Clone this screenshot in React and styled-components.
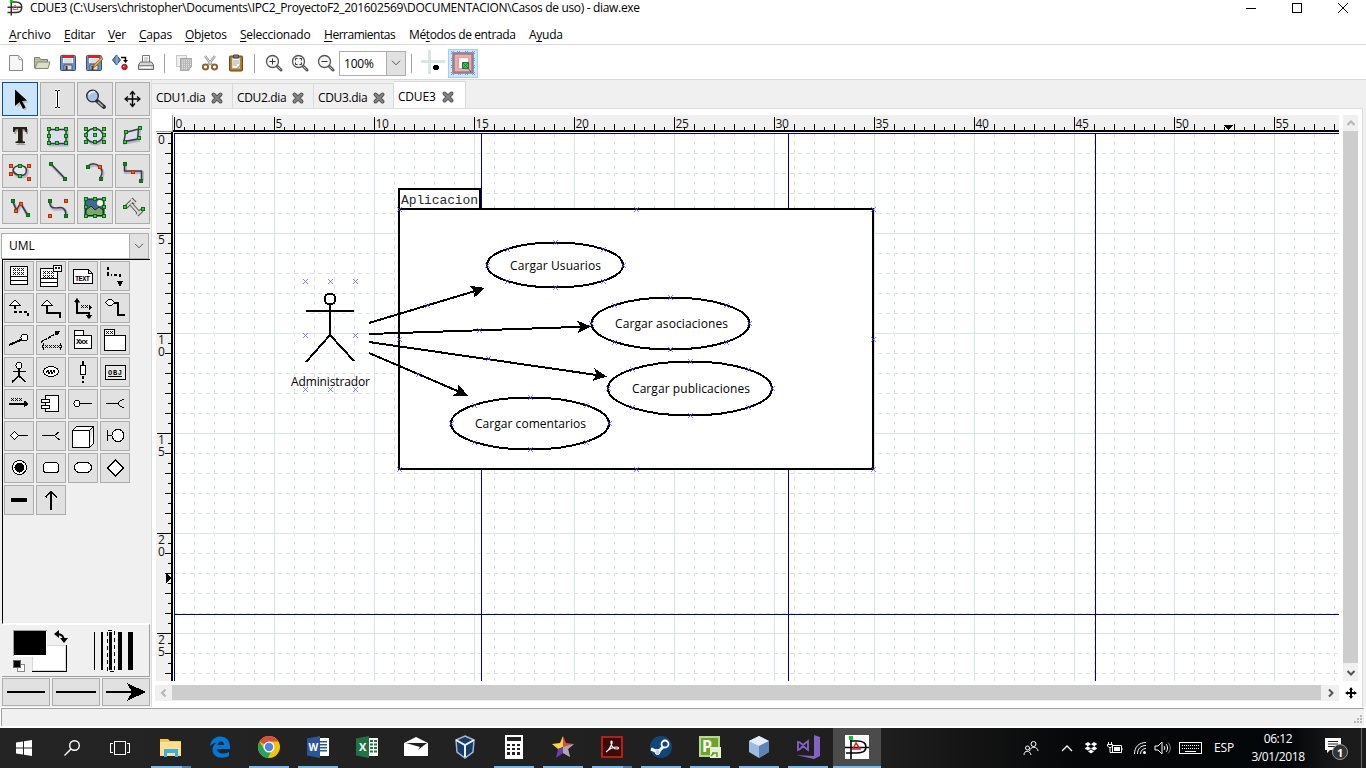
import React from "react";
import styled, { createGlobalStyle } from "styled-components";

const Global = createGlobalStyle`
  html, body { margin: 0; padding: 0; overflow: hidden; }
  body { width: 1366px; height: 768px; background: #f0f0f0; color: #000; }
  * { box-sizing: border-box; }
  svg { display: block; flex: none; }
`;

const ui = `"Open Sans", "Noto Sans", sans-serif`;

const Screen = styled.div`
  width: 1366px;
  height: 768px;
  display: flex;
  flex-direction: column;
  font: 12px/16px ${ui};
  background: #f0f0f0;
`;
const TitleBar = styled.header`
  height: 24px;
  padding: 0 0 8px 6px;
  display: flex;
  align-items: center;
  background: #fff;
`;
const Title = styled.span`
  flex: 1;
  margin-left: 6px;
  white-space: nowrap;
  letter-spacing: ${(p) => p.$ls || 0}px;
`;
const WindowButtons = styled.div`
  display: flex;
  width: 138px;
`;
const MenuBar = styled.nav`
  height: 21px;
  padding: 2px 0 0 9px;
  display: flex;
  gap: 14px;
  align-items: center;
  background: #fff;
  border-bottom: 1px solid #d9d9d9;
`;
const MenuItem = styled.span`
  width: ${(p) => p.$w}px;
  white-space: nowrap;
  letter-spacing: ${(p) => p.$ls}px;
  u { text-underline-offset: 2px; text-decoration-skip-ink: none; }
`;
const Toolbar = styled.div`
  height: 35px;
  padding: 2px 3px 0;
  display: flex;
  align-items: center;
  background: #fff;
  border-bottom: 1px solid #d9d9d9;
`;
const ToolSlot = styled.div`
  width: 26px;
  height: 26px;
  display: flex;
  align-items: center;
  justify-content: center;
`;
const ToolSep = styled.div`
  width: 1px;
  height: 19px;
  margin: 0 ${(p) => p.$r ?? 6}px 0 ${(p) => p.$l ?? 5}px;
  background: #a0a0a0;
`;
const ZoomCombo = styled.div`
  width: 67px;
  height: 25px;
  display: flex;
  border: 1px solid #acacac;
  background: #fff;
  line-height: 23px;
  padding-left: 4px;
  justify-content: space-between;
  letter-spacing: -0.2px;
`;
const ComboArrow = styled.div`
  flex: none;
  width: 20px;
  display: flex;
  align-items: center;
  justify-content: center;
  background: #e1e1e1;
  border: 1px solid #adadad;
  margin: -1px;
`;
const SnapButton = styled.div`
  width: 30px;
  height: 29px;
  margin-left: 2px;
  display: flex;
  align-items: center;
  justify-content: center;
  background: #cce8ff;
  border: 1px solid #99d1ff;
`;
const Body = styled.div`
  height: 627px;
  display: flex;
`;
const Side = styled.aside`
  width: 152px;
  display: flex;
  flex-direction: column;
  padding: 2px 1px 0 2px;
  border-right: 1px solid #dcdcdc;
`;
const Tools = styled.div`
  display: grid;
  grid-template-columns: 36px 35px 36px 35px;
  grid-auto-rows: 34px;
  gap: 2px;
`;
const Cell = styled.div`
  display: flex;
  align-items: center;
  justify-content: center;
  background: ${(p) => (p.$on ? "#cce4f7" : "#e1e1e1")};
  border: 1px solid ${(p) => (p.$on ? "#005499" : "#adadad")};
`;
const ToolCell = styled(Cell)`
  padding-right: ${(p) => (p.$on ? 0 : 2)}px;
`;
const Rule = styled.div`
  height: 2px;
  margin: 4px 0 3px -2px;
  background: #a0a0a0;
  border-bottom: 1px solid #fff;
`;
const SheetCombo = styled.div`
  height: 26px;
  margin: 0 1px 0 -1px;
  display: flex;
  justify-content: space-between;
  padding-left: 7px;
  line-height: 24px;
  background: #fff;
  border: 1px solid #acacac;
`;
const SheetArea = styled.div`
  height: 365px;
  padding: 1px 0 0 1px;
  border-top: 1px solid #000;
  border-left: 1px solid #000;
  border-bottom: 1px solid #fff;
`;
const Sheet = styled.div`
  display: grid;
  grid-template-columns: repeat(4, 30px);
  grid-auto-rows: 30px;
  gap: 2px;
`;
const StyleArea = styled.div`
  height: 53px;
  padding-top: 1px;
  border-top: 1px solid #fff;
  border-right: 1px solid #a0a0a0;
  border-bottom: 1px solid #a0a0a0;
`;
const LineButtons = styled.div`
  margin-top: 1px;
  display: grid;
  grid-template-columns: repeat(3, 48px);
  height: 28px;
  gap: 2px;
`;
const Notebook = styled.section`
  flex: 1;
  display: flex;
  flex-direction: column;
`;
const Tabs = styled.div`
  height: 28px;
  padding-top: 1px;
  display: flex;
  align-items: flex-end;
`;
const Tab = styled.div`
  height: ${(p) => (p.$on ? 28 : 25)}px;
  width: ${(p) => p.$w}px;
  margin-bottom: ${(p) => (p.$on ? -1 : 0)}px;
  padding: ${(p) => (p.$on ? 2 : 3)}px 0 0 4px;
  display: flex;
  align-items: center;
  gap: ${(p) => p.$gap}px;
  background: ${(p) => (p.$on ? "#fff" : "#f0f0f0")};
  border-top: 1px solid #d9d9d9;
  border-right: 1px solid #d9d9d9;
  white-space: nowrap;
  letter-spacing: ${(p) => p.$ls}px;
`;
const Page = styled.div`
  width: 1211px;
  height: 599px;
  background: #fff;
  border-top: 1px solid #dcdcdc;
  border-right: 1px solid #dcdcdc;
  padding: 6px 0 0 4px;
  display: grid;
  grid-template-columns: 17px 1166px 4px 15px;
  grid-template-rows: 17px 549px 4px 16px;
`;
const Corner = styled.div`
  border-right: 1px solid #a0a0a0;
  border-bottom: 1px solid #a0a0a0;
`;
const VScroll = styled.div`
  grid-column: 4;
  grid-row: 1 / 3;
  display: flex;
  flex-direction: column;
  background: #f0f0f0;
`;
const HScroll = styled.div`
  grid-column: 1 / 3;
  grid-row: 4;
  margin-left: -1px;
  display: flex;
  background: #f0f0f0;
`;
const Thumb = styled.div`
  flex: 1;
  background: #cdcdcd;
  margin-bottom: ${(p) => p.$mb || 0}px;
`;
const ScrollArrow = styled.div`
  width: ${(p) => p.$w}px;
  height: ${(p) => p.$h}px;
  display: flex;
  align-items: center;
  justify-content: center;
`;
const Pan = styled.div`
  grid-column: 4;
  grid-row: 4;
  display: flex;
  align-items: center;
  justify-content: center;
`;
const Status = styled.footer`
  height: 21px;
  padding: 1px 2px 2px 1px;
  background: #fff;
`;
const StatusInner = styled.div`
  height: 18px;
  display: flex;
  justify-content: flex-end;
  align-items: flex-end;
  background: #f0f0f0;
  border-top: 1px solid #a0a0a0;
  border-left: 1px solid #a0a0a0;
`;
const Taskbar = styled.div`
  height: 40px;
  display: flex;
  color: #fff;
  background: linear-gradient(90deg, #242424 0, #1f1f1f 880px, #151515 960px, #050708 1080px, #030608 1290px, #1a1a1a 1340px, #1c1c1c 100%);
`;
const StartArea = styled.div`
  flex: none;
  width: 146px;
  display: flex;
`;
const SysButton = styled.div`
  width: 48px;
  display: flex;
  align-items: center;
  justify-content: center;
`;
const AppButton = styled.div`
  flex: none;
  width: 49px;
  padding: 0 ${(p) => (p.$on ? 0 : 4)}px 0 ${(p) => (p.$on ? 1 : 5)}px;
  display: flex;
  flex-direction: column;
  justify-content: space-between;
  align-items: center;
`;
const AppFace = styled.div`
  height: 38px;
  width: 100%;
  display: flex;
  align-items: center;
  justify-content: center;
  background: ${(p) => (p.$on ? "#4b4b4b" : "transparent")};
`;
const RunBar = styled.div`
  height: 2px;
  width: 100%;
  background: ${(p) => (p.$multi ? "linear-gradient(90deg,#76b9ed 31px,#4b83b0 31px)" : "#76b9ed")};
`;
const Tray = styled.div`
  flex: 1;
  display: flex;
  align-items: center;
  padding-left: 132px;
`;
const TrayItem = styled.div`
  flex: none;
  width: ${(p) => p.$w}px;
  display: flex;
  justify-content: center;
  white-space: nowrap;
  letter-spacing: -0.2px;
`;
const Clock = styled.div`
  flex: none;
  width: 66px;
  text-align: center;
  line-height: 18px;
  letter-spacing: -0.4px;
`;
const ShowDesktop = styled.div`
  width: 5px;
  height: 40px;
  margin-left: auto;
  border-left: 1px solid #6a6a6a;
`;

/* ---------- small drawing helpers ---------- */
const Ico = ({ w = 20, h = w, crisp, children, vb }) => (
  <svg width={w} height={h} viewBox={vb || `0 0 ${w} ${h}`} fill="none" stroke="#000" strokeWidth="1" shapeRendering={crisp ? "crispEdges" : "auto"}>
    {children}
  </svg>
);
const Chevron = () => (
  <Ico w={10} h={6}><path d="M1 .8l4 4 4-4" stroke="#555" /></Ico>
);
const DiaLogo = ({ s = 20 }) => (
  <Ico w={s} vb="0 0 24 24">
    <path d="M7 0v22M7 4h6c5 0 8 3 8 7s-3 7-8 7H2M2 11h18" stroke="#333" strokeWidth="2" />
    <path d="M12 8l4 6H9z" stroke="#d55" strokeWidth="1.200" />
    <path d="M5 1h4v4H5z" fill="#0c0" stroke="none" />
  </Ico>
);

/* ---------- toolbar icons ---------- */
const Floppy = ({ pen }) => (
  <Ico w={18}>
    <rect x="1.5" y="1.5" width="15" height="15" rx="1" fill="#6f93c4" stroke="#2f4f86" />
    <path d="M4 2h10v7H4z" fill="#fff" stroke="none" />
    <path d="M3 1h12v3H3z" fill="#e02020" stroke="none" />
    <path d="M5 6h8M5 8h8" stroke="#bbb" />
    <path d="M5 11h8v5H5z" fill="#ddd" stroke="#555" />
    <path d="M6.500 12h2v4h-2z" fill="#334" stroke="none" />
    {pen && <><path d="M16.500 3L9 11l-2 3 3.500-1.500L18 5z" fill="#f3a342" stroke="#9a5a10" strokeWidth=".8" /><path d="M7 14l2-1-1-1z" fill="#222" stroke="none" /></>}
  </Ico>
);
const Mag = ({ kind }) => (
  <Ico w={18}>
    <path d="M11 11l5 5" stroke="#555" strokeWidth="3" strokeLinecap="round" />
    <path d="M12.500 12.500l3 3" stroke="#ccc" />
    <circle cx="7.500" cy="7.500" r="6" fill="#f4f6f4" stroke="#555" strokeWidth="1.300" />
    {kind === "in" && <path d="M4.500 7.500h6M7.500 4.500v6" stroke="#333" />}
    {kind === "out" && <path d="M4.500 7.500h6" stroke="#333" />}
    {kind === "fit" && <path d="M4.500 6.500v-2h2M8.500 4.500h2v2M10.500 8.500v2h-2M6.500 10.500h-2v-2" stroke="#333" />}
  </Ico>
);
const tool = {
  new: <Ico w={18}><path d="M2.500 1.500h9l4 4v11h-13z" fill="#f6f6f6" stroke="#888" /><path d="M11.500 1.500l.500 4 3.500.500" fill="#fff" stroke="#999" /></Ico>,
  open: <Ico w={18}><path d="M1.500 14V3.500h5l1 2h7V8" fill="#b5bf9d" stroke="#79856a" /><path d="M2 14.500L4.500 8H17l-2 6.500z" fill="#d9dfcb" stroke="#7f8b6f" /></Ico>,
  save: <Floppy />,
  saveAs: <Floppy pen />,
  exp: <Ico w={18}><path d="M5.500 1l4 5-4 5-4-5z" fill="#5d8ac2" stroke="#234b80" /><path d="M6 2v8" stroke="#a9c6e8" /><path d="M10 3.500h4.500V7" stroke="#000" strokeWidth="1.500" /><path d="M12 6h5L14.500 9z" fill="#000" stroke="none" /><circle cx="13.500" cy="13" r="2.700" fill="#d8242f" stroke="#8d1018" /><path d="M12 12.500h1.500" stroke="#fbb" /></Ico>,
  print: <Ico w={18}><path d="M5.500 9V1.500h7V9" fill="#fff" stroke="#777" /><path d="M7 4h4M7 6h4" stroke="#aaa" /><path d="M1.500 11l2-3h11l2 3v4.500h-15z" fill="#d5d5d5" stroke="#666" /><path d="M2 11.500h14" stroke="#888" /><path d="M4 13.500h10" stroke="#fff" /></Ico>,
  copy: <Ico w={18}><path d="M1.500 1.500h10v11h-10z" stroke="#999" strokeDasharray="1 1" fill="#eee" /><path d="M5.500 4.500h11v8l-3 4h-8z" fill="#bbb" stroke="#777" strokeDasharray="1 1" /><path d="M7 6.500h9M7 8.500h9M7 10.500h9M7 12.500h8M7 14.500h6" stroke="#ddd" strokeDasharray="1 1" /></Ico>,
  cut: <Ico w={18}><path d="M4 2l7 9M14 2l-7 9" stroke="#999" strokeWidth="2.400" /><path d="M4 2l7 9M14 2l-7 9" stroke="#eee" strokeWidth=".8" /><ellipse cx="4.500" cy="13" rx="2.600" ry="2.400" stroke="#8a6534" strokeWidth="2" /><ellipse cx="13.500" cy="13" rx="2.600" ry="2.400" stroke="#8a6534" strokeWidth="2" /></Ico>,
  paste: <Ico w={18}><rect x="2.500" y="2" width="13" height="15" rx="1" fill="#b57a1c" stroke="#6f4810" /><path d="M5 4h8v10.500H5z" fill="#f5f5f5" stroke="#999" strokeWidth=".6" /><path d="M6.500 1h5v3h-5z" fill="#777" stroke="#444" /><path d="M6 7h6M6 9h6M6 11h4" stroke="#aaa" /><path d="M10 14.500l3-3" stroke="#777" /></Ico>,
};
const GridIcon = () => (
  <Ico w={26} crisp><path d="M9.500 0v24M1 11.500h24" stroke="#dbe6e4" strokeWidth="3" /><path d="M14 15h4v1h1v3h-1v1h-4v-1h-1v-3h1z" fill="#000" stroke="none" /></Ico>
);
const SnapIcon = () => (
  <Ico w={26}>
    <path d="M2 2h22v22H2z" fill="#f4a8a8" stroke="none" />
    <rect x="3.500" y="3.500" width="19" height="19" rx="1" stroke="#888" strokeWidth="2.500" />
    <path d="M7 7h12v12H7z" fill="#f09a9a" stroke="none" />
    <path d="M9 8h9v10H9z" fill="#fff" stroke="none" />
    <path d="M12.500 12.500h6v6h-6z" fill="#2fce4a" stroke="#2a6a3a" />
    <path d="M13 13l5 5M18 13l-5 5" stroke="#064" strokeWidth=".7" />
    <path d="M18 18l3 4" stroke="#555" />
    <path d="M1 1l3 3m0-3L1 4M7 1l3 3m0-3L7 4M15 1l3 3m0-3l-3 3M22 1l3 3m0-3l-3 3M1 8l3 3m0-3l-3 3M1 15l3 3m0-3l-3 3M1 22l3 3m0-3l-3 3M8 22l3 3m0-3l-3 3M15 22l3 3m0-3l-3 3M22 22l3 3m0-3l-3 3M22 8l3 3m0-3l-3 3M22 15l3 3m0-3l-3 3" stroke="#7878f0" strokeWidth=".8" />
  </Ico>
);

/* ---------- toolbox icons, drawn in a 28px box ---------- */
const Glow = ({ d }) => <path d={d} stroke="#8f8fc0" strokeWidth="3" opacity=".55" transform="translate(1 1.500)" />;
const Dots = ({ pts, c = "#1fdc2f", b = "#0a6a10" }) => pts.map(([x, y]) => (
  <rect key={`${x}-${y}`} x={x - 1.5} y={y - 1.5} width="3" height="3" fill={c} stroke={b} strokeWidth="1" shapeRendering="crispEdges" />
));
const Red = ({ pts }) => <Dots pts={pts} c="#ff5a1e" b="#b03000" />;
const Curve = ({ d, fill, children }) => (
  <Ico w={28}><Glow d={d} /><path d={d} stroke="#3a3a3a" strokeWidth="1.500" fill={fill || "none"} />{children}</Ico>
);
const box8 = (x0, y0, x1, y1) => {
  const xm = (x0 + x1) / 2, ym = (y0 + y1) / 2;
  return [[x0, y0], [xm, y0], [x1, y0], [x0, ym], [x1, ym], [x0, y1], [xm, y1], [x1, y1]];
};
const toolbox = [
  <Ico w={28}><path d="M9.500 5l11 10.500-4.500.500 3 6-2.500 1.500-3-6.500-4 3.500z" transform="translate(2 2)" fill="#bbb" stroke="none" /><path d="M9 4.500l12 11-5 .5 3.500 6.500-2.500 1.500-3.500-7-4.500 4z" fill="#000" stroke="none" /></Ico>,
  <Ico w={28} crisp><path d="M14.500 6v16M12 5.500h2M15 5.500h2M12 22.500h2M15 22.500h2" stroke="#fff" strokeWidth="3" /><path d="M14.500 6v16M12 5.500h2M15 5.500h2M12 22.500h2M15 22.500h2" /></Ico>,
  <Ico w={28}><path d="M16 15l8 7" stroke="#333" strokeWidth="4" strokeLinecap="round" /><path d="M18 17l5 4.500" stroke="#bbb" strokeWidth="1.500" /><circle cx="12.500" cy="11" r="5.800" fill="#a8c4e8" stroke="#222" strokeWidth="1.300" /><path d="M9 10c1-3 4-4 6-3" stroke="#eaf4ff" strokeWidth="1.500" /></Ico>,
  <Ico w={28}><path d="M14.500 7v14M7.500 14h14" strokeWidth="1.500" /><path d="M12 9.500l2.500-3 2.500 3M12 18.500l2.500 3 2.500-3M10 11.500L7 14l3 2.500M19 11.500l3 2.500-3 2.500" strokeWidth="1.200" /></Ico>,
  <Ico w={28}><path d="M8 7h13v5h-2c0-2-1-3-3-3v11c0 1 1 2 2.500 2v1h-9v-1c1.500 0 2.500-1 2.500-2V9c-2 0-3 1-3 3H7z" transform="translate(2 1)" fill="#a99" stroke="none" /><path d="M8 6h14v5h-1.500c0-2-1-3-3-3v11c0 1 1 1.500 2.500 1.500V22h-9.500v-1.500c1.500 0 2.500-.5 2.500-1.500V8c-2 0-3 1-3.500 3H8z" fill="#222018" stroke="none" /></Ico>,
  <Curve d="M6 8.500h17v14H6z" fill="#dcdcf0"><Dots pts={box8(5.5, 7.5, 22.5, 21.5)} /></Curve>,
  <Curve d="M6 14.500a8.500 7 0 1 0 17 0a8.500 7 0 1 0-17 0z" fill="#dcdcf0"><Dots pts={[...box8(5.5, 7.5, 23.5, 20.5), [14.5, 13.5]]} /></Curve>,
  <Curve d="M7.500 11.500L20.500 8l-1 10L6 20.500z" fill="#dcdcf0"><Dots pts={[[7.5, 10.5], [21.5, 6.500], [20.5, 16.500], [6.5, 20.5]]} /></Curve>,
  <Curve d="M8 13c1-4 7-6 12-3c2 2 2 6-1 8c-4 1-10 0-11-5z" fill="#e6e6f4"><Dots pts={[[14.5, 8.500], [14.5, 18.5]]} /><Red pts={[[5.5, 8.500], [5.5, 16.5], [23.5, 8.500], [23.5, 21.500]]} /></Curve>,
  <Curve d="M7.500 6.500L21.500 21"><Dots c="#0a8a20" pts={[[7.5, 6.500], [21.5, 21.500]]} /></Curve>,
  <Curve d="M7.500 9.500c4-4 9-3 12 0c3 3 3 7 1 11"><Dots c="#0a8a20" pts={[[7.5, 9.500], [20.5, 21.500]]} /><Red pts={[[19.500, 9.500]]} /></Curve>,
  <Curve d="M6.500 6.500v7.500h17v8"><Dots c="#0a8a20" pts={[[6.5, 6.500], [22.5, 23.500]]} /><Red pts={[[14.500, 14.500]]} /></Curve>,
  <Curve d="M7.500 8l4 9 4-7 7 12"><Dots c="#0a8a20" pts={[[7.500, 7.500], [22.5, 21.500]]} /><Red pts={[[10.500, 17.500], [15.500, 10.500]]} /></Curve>,
  <Curve d="M6.500 7.500c0 10 7 7 11 7s6 4 5 8"><Dots c="#0a8a20" pts={[[6.500, 7.500], [22.500, 22.500]]} /><Red pts={[[22.500, 7.500], [6.500, 22.500]]} /></Curve>,
  <Ico w={28}><path d="M5 6h19v17H5z" fill="#40699a" stroke="#111" /><circle cx="20" cy="10" r="3" fill="#fff7d0" stroke="none" /><path d="M6 17l5-4 4 4 4-3 4 3v5.500H6z" fill="#7fa56f" stroke="#152c15" /><Dots pts={box8(5.5, 5.500, 23.5, 22.5)} /></Ico>,
  <Ico w={28}><path d="M8 14l7-7M13 6l4 4M13 11l8 9M19 22l5-5" stroke="#555" strokeWidth="4" /><path d="M8 14l7-7M13 6l4 4M13 11l8 9M19 22l5-5" stroke="#ddd" strokeWidth="2" /><Dots pts={[[6.500, 13.500], [24.500, 15.500]]} /></Ico>,
];

/* ---------- UML sheet, drawn in the 28px inside of each cell ---------- */
const X3 = ({ x, y, n = 3, s = 3 }) => <path d={Array.from({ length: n }, (_, i) => `M${x + i * (s + 1)} ${y}l${s} ${s}m0 ${-s}l${-s} ${s}`).join("")} strokeWidth=".9" shapeRendering="auto" />;
const P = ({ d, f = "none", w = 1, ...r }) => <path d={d} fill={f} strokeWidth={w} {...r} />;
const Tiny = styled.text`
  font: bold ${(p) => p.$s || 6}px "Liberation Mono", monospace;
  fill: #000;
  stroke: none;
`;
const uml = [
  <><P f="#fff" d="M5.500 4.500h17v18h-17zM5.500 14.500h17M5.500 18.500h17" /><X3 x={8} y={6} /><X3 x={8} y={10} /></>,
  <><P f="#fff" d="M3.500 6.500h17v18h-17zM3.500 16.500h17M3.500 20.500h17" /><X3 x={6} y={9} /><X3 x={6} y={13} /><P f="#fff" d="M16.500 3.500h8v6h-8z" /><X3 x={18} y={5} n={2} s={2} /></>,
  <><P f="#fff" d="M4.500 7.500h15l4 4v10h-19zM19.500 7.500v4h4" /><Tiny x="6" y="19" $s={7} textLength="15">TEXT</Tiny></>,
  <><P w={2} d="M7 5v3M7 10v2.500h4M13 12.500h6v3" strokeDasharray="3 2" /><P f="#000" d="M16.500 19h5l-2.500 5z" /></>,
  <><P f="#fff" d="M4.500 11.500h11L10 6z" /><P w={2} d="M10 12v6h13v6" strokeDasharray="3 2" /></>,
  <><P f="#fff" d="M4.500 11.500h11L10 6z" /><P w={2} d="M10 12v7h13v5" /></>,
  <><P w={2} d="M8 5v14h12v5" /><P f="#000" w={.5} d="M5.500 8h5L8 4zM17 21h6l-3 4z" /><X3 x={12} y={11} n={2} /><P f="#000" d="M20 11l2 2.500-2 2.500z" /></>,
  <><P f="#fff" d="M4.500 8.500l3-3h3l3 3-3 3h-3z" /><P w={2} d="M13 8.500h4v12h7" /></>,
  <><P w={2} d="M4 19l14-6" /><circle cx="19.500" cy="11.500" r="3.500" fill="#fff" /></>,
  <><P w={1.500} d="M4 16L20 7" strokeDasharray="3 1" /><P f="#000" d="M18 5h5l-3 4z" /><X3 x={8} y={19} n={4} s={3} /><P d="M7 17.500l-1.500 3 1.500 3M23 17.500l1.500 3-1.500 3" /></>,
  <><P f="#fff" d="M5.500 9.500h17v13h-17zM5.500 4.500h9v5h-9z" /><Tiny x="7" y="18" $s={8} textLength="12">Xxx</Tiny></>,
  <><P f="#fff" d="M3.500 9.500h21v15h-21zM3.500 3.500h9.500v6h-9.500z" /><X3 x={5} y={5} n={2} /></>,
  <><circle cx="14" cy="7.500" r="3" fill="#fff" /><P w={1.600} d="M14 11v7l-7 6M14 18l6.500 6M8 13.500h13" /></>,
  <><ellipse cx="14" cy="13.500" rx="7.500" ry="5" fill="#fff" /><P d="M9 15l2-3 1 4 2-4 1 4 2-4 1 3" /></>,
  <><P w={1.500} d="M14 3v5M14 18v3M14 23v2" /><P f="#fff" d="M11.500 7.500h5v9h-5z" /></>,
  <><P d="M4.500 7.500h20v14h-20z" f="#e8e8e8" /><Tiny x="7" y="17" $s={7} textLength="14">OBJ</Tiny><P d="M7 18.500h14" /></>,
  <><P w={2} d="M4 14h17" /><P f="#000" d="M19 11l4 3-4 3z" /><X3 x={6} y={8} n={3} /></>,
  <><P f="#fff" d="M8.500 5.500h13v16h-13z" /><P f="#fff" d="M4.500 9.500h8v3h-8zM4.500 15.500h8v3h-8z" /></>,
  <><circle cx="8" cy="13.500" r="3" fill="#fff" /><P d="M11 13.500h12" /></>,
  <><P d="M5 13.500h13M23 9.500c-7 1-7 7 0 8" /></>,
  <><P f="#fff" d="M5.500 13.500l4-4 4 4-4 4z" /><P d="M13 13.500h10" /></>,
  <><P d="M5 13.500h13M22.500 9.500l-5 4 5 4.500" /></>,
  <><P f="#fff" d="M3.500 8.500h17v17h-17zM3.500 8.500l4-4h17l-4 4M24.500 4.500v17l-4 4" /></>,
  <><circle cx="17" cy="13.500" r="6" fill="#fff" /><P d="M6.500 8v11M7 13.500h4" /></>,
  <><circle cx="14.500" cy="13.500" r="7" fill="#fff" /><circle cx="14.500" cy="13.500" r="4.500" fill="#000" /></>,
  <><rect x="6.500" y="8.500" width="15" height="10" rx="3" fill="#fff" /></>,
  <><rect x="5.500" y="8.500" width="17" height="10" rx="5" fill="#fff" /></>,
  <><P f="#fff" d="M6.500 14l8-8 8 8-8 8z" /></>,
  <><P w={4} d="M6 14h16" /></>,
  <><P w={1.600} d="M14 24V6M8.500 11.500L14 5.500l6 6" /></>,
];

const StyleSwatches = () => (
  <svg width="147" height="50" viewBox="2 626 147 50" shapeRendering="crispEdges" fill="none">
    <path d="M32 645h35v27H32z" fill="#000" /><path d="M32 645h34v26H32z" fill="#d8d8d8" /><path d="M33 646h32v24H33z" fill="#fff" />
    <path d="M13 630h34v27H13z" fill="#fff" /><path d="M13 630h34v1H14v25h-1z" fill="#a0a0a0" /><path d="M14 631h32v24H14z" fill="#000" />
    <path d="M17.500 664.500h7v7h-7z" fill="#fff" stroke="#888" /><path d="M13.500 660.500h7v7h-7z" fill="#000" stroke="#666" />
    <g shapeRendering="auto"><path d="M57 634c5 0 7 2 7 7" stroke="#000" strokeWidth="1.800" /><path d="M54 634l5-4v8zM60 638h8l-4 5z" fill="#000" /></g>
    <path d="M94 632h1v38h-1zM101 632h2v38h-2zM109 632h3v38h-3zM118 632h4v38h-4zM128 632h5v38h-5z" fill="#000" />
    <path d="M107.500 630.500h7v41h-7z" stroke="#000" strokeDasharray="4 3" />
  </svg>
);

/* ---------- rulers and canvas; coordinates share the window's origin ---------- */
const RulerText = styled.text`
  font: 12px ${ui};
  fill: #111;
`;
const range = (n) => Array.from({ length: n }, (_, i) => i);
const HRuler = () => (
  <svg width="1166" height="17" viewBox="173 115 1166 17" shapeRendering="crispEdges">
    <path d="M173 115h1166v17H173z" fill="#f0f0f0" />
    <path d="M173 130h1166v2H173z" fill="#000" />
    {range(117).map((i) => {
      const h = i % 10 === 0 ? 13 : i % 2 === 0 ? 6 : 3;
      return <rect key={i} x={174 + i * 10} y={130 - h} width="1" height={h} fill="#000" />;
    })}
    {range(12).map((k) => <RulerText key={k} x={175.5 + k * 100} y="128" letterSpacing="-.3">{k * 5}</RulerText>)}
    <path d="M1223 125h10l-5 5z" fill="#000" />
  </svg>
);
const VRuler = () => (
  <svg width="17" height="549" viewBox="156 132 17 549" shapeRendering="crispEdges">
    <path d="M156 132h17v549h-17z" fill="#f0f0f0" />
    <path d="M171 132h2v549h-2z" fill="#000" />
    {range(55).map((i) => {
      const w = i % 10 === 0 ? 14 : i % 2 === 0 ? 6 : 3;
      return <rect key={i} x={171 - w} y={133 + i * 10} width={w} height="1" fill="#000" />;
    })}
    {range(6).map((k) => String(k * 5).split("").map((c, j) => (
      <RulerText key={`${k}-${j}`} x="158" y={144 + k * 100 + j * 12}>{c}</RulerText>
    )))}
    <path d="M166 573v10l6-5z" fill="#000" />
  </svg>
);

const CanvasText = styled.text`
  font: 12px ${ui};
  fill: #000;
`;
const MonoText = styled.text`
  font: 13px "Liberation Mono", monospace;
  fill: #2a2a2a;
`;
const cases = [
  { t: "Cargar Usuarios", cx: 555, cy: 265, rx: 68, ry: 22.5, x: 510, w: 91 },
  { t: "Cargar asociaciones", cx: 670.5, cy: 323.5, rx: 79, ry: 26, x: 615, w: 113 },
  { t: "Cargar publicaciones", cx: 690, cy: 388.5, rx: 82, ry: 27, x: 632, w: 118 },
  { t: "Cargar comentarios", cx: 530, cy: 423.5, rx: 79, ry: 26, x: 475, w: 111 },
];
const arrows = [[369, 323, 485, 288], [369, 334, 591, 326.5], [369, 342, 607, 376.5], [369, 353, 468, 395.5]];
const marks = [
  ...[209, 339, 469].flatMap((y) => [[399, y], [873, y]]), [636, 209], [636, 469],
  ...[281, 335, 389].flatMap((y) => [[305, y], [355, y]]), [330, 281], [330, 389],
  [427, 305], [479, 330], [488, 358], [418, 374],
  ...cases.flatMap((c) => range(8).map((i) => [
    Math.floor(c.cx + c.rx * Math.cos((i * Math.PI) / 4) + 0.3),
    Math.floor(c.cy + c.ry * Math.sin((i * Math.PI) / 4) + 0.3),
  ])),
];
const Canvas = () => (
  <svg width="1166" height="549" viewBox="173 132 1166 549" shapeRendering="crispEdges" fill="none">
    <path d="M173 132h1166v549H173z" fill="#fff" />
    {range(58).map((i) => (
      <path key={`v${i}`} d={`M${194.5 + i * 20} 133V681`} stroke="#d8e5e2" strokeDasharray={i % 5 === 4 ? "none" : "4 4"} />
    ))}
    {range(27).map((i) => (
      <path key={`h${i}`} d={`M174 ${153.5 + i * 20}H1339`} stroke="#d8e5e2" strokeDasharray={i % 5 === 4 ? "none" : "4 4"} />
    ))}
    <path d="M174.500 133V681M174 133.500H1339M481.500 133V681M788.500 133V681M1095.500 133V681M174 614.500H1339" stroke="#000099" />
    <g stroke="#000" strokeWidth="2">
      <path d="M399 209h474v260H399z" fill="#fff" />
      <path d="M399 189h81v20h-81z" fill="#fff" />
      {cases.map((c) => <ellipse key={c.t} cx={c.cx} cy={c.cy} rx={c.rx} ry={c.ry} fill="#fff" />)}
      <circle cx="330" cy="299" r="5.500" fill="#fff" />
      <path d="M306 311h48M330 304v32M330 335l-24 27M330 335l24 26" />
      {arrows.map(([x1, y1, x2, y2]) => {
        const a = (Math.atan2(y2 - y1, x2 - x1) * 180) / Math.PI;
        return (
          <g key={y1}>
            <path d={`M${x1} ${y1}L${x2 - 10 * Math.cos((a * Math.PI) / 180)} ${y2 - 10 * Math.sin((a * Math.PI) / 180)}`} />
            <path d="M0 0L-14-6.500L-10.500 0L-14 6.500z" transform={`translate(${x2} ${y2}) rotate(${a})`} fill="#000" stroke="none" />
          </g>
        );
      })}
    </g>
    <MonoText x="401" y="204" textLength="77">Aplicacion</MonoText>
    {cases.map((c) => <CanvasText key={c.t} x={c.x} y={Math.round(c.cy) + 5 - (c.cy % 1 ? 1 : 0)} textLength={c.w}>{c.t}</CanvasText>)}
    <CanvasText x="291" y="386" textLength="79">Administrador</CanvasText>
    <path d={marks.map(([x, y]) => `M${x - 2} ${y - 2}l5 5m0-5l-5 5`).join("")} stroke="#5a5aff" strokeWidth=".8" shapeRendering="auto" />
  </svg>
);

const TabClose = () => (
  <Ico w={14}><path d="M3.500 3.500l7 7m0-7l-7 7" stroke="#555" strokeWidth="4" strokeLinecap="round" /><path d="M3.500 3.500l7 7m0-7l-7 7" stroke="#858585" strokeWidth="2.200" strokeLinecap="round" /></Ico>
);

/* ---------- taskbar icons ---------- */
const AppGlyph = styled.text`
  font: bold ${(p) => p.$s}px ${ui};
  fill: #fff;
  stroke: none;
`;
const N = { stroke: "none" };
const apps = [
  [<Ico w={24}><g {...N}><path d="M1 4h8l2 2h11v15H1z" fill="#f4c84a" /><path d="M1 7h21v14H1z" fill="#ffe08a" /><path d="M5 22v-8h14v8h-3v-4H8v4z" fill="#35b0e8" /></g></Ico>, 1, 1],
  [<Ico w={24}><path {...N} fill="#0078d7" d="M2 11C3 4 8 1.500 12 1.500c6 0 10 4 10 10V14H9c0 3 3 4.500 6 4.500 2 0 4-.5 6-1.500v4c-2 1.200-4.500 1.700-7 1.700-6 0-9.500-3.500-9.500-8 0-3 1.500-5.500 4-7C6 8 4 9 2 11zm7.500-1H16c0-2-1-3.500-3.200-3.500C11 6.500 10 8 9.500 10z" /></Ico>, 0],
  [<Ico w={24}><g {...N}><circle cx="12" cy="12" r="11" fill="#f2c500" /><path d="M12 12L2.500 6.500A11 11 0 0 1 21.500 6.500H12z" fill="#de4a3c" /><path d="M2.500 6.500A11 11 0 0 0 11 23l4-8-8-1z" fill="#26a35a" /><circle cx="12" cy="12" r="5.500" fill="#fff" /><circle cx="12" cy="12" r="4.200" fill="#4a86e8" /></g></Ico>, 1],
  [<Ico w={24}><g {...N}><path d="M12 3h11v18H12z" fill="#fff" /><path d="M14 6h7v1.500h-7zM14 9h7v1.500h-7zM14 12h7v1.500h-7zM14 15h7v1.500h-7z" fill="#2a5699" /><path d="M1 3.500L14 1v22L1 20.500z" fill="#2a5699" /></g><AppGlyph x="2.500" y="16" $s={10}>W</AppGlyph></Ico>, 1],
  [<Ico w={24}><g {...N}><path d="M12 3h11v18H12z" fill="#fff" /><path d="M15 5h3v2h-3zM19 5h3v2h-3zM15 8.500h3v2h-3zM19 8.500h3v2h-3zM15 12h3v2h-3zM19 12h3v2h-3zM15 15.500h3v2h-3zM19 15.500h3v2h-3z" fill="#207245" /><path d="M1 3.500L14 1v22L1 20.500z" fill="#207245" /></g><AppGlyph x="4" y="16" $s={11}>X</AppGlyph></Ico>, 0],
  [<Ico w={24}><g {...N}><path d="M0 8l12-6 12 6v13H0z" fill="#fff" /><path d="M2 8h21l-9 7 2-3z" fill="#1f1f1f" /></g></Ico>, 0],
  [<Ico w={24}><path d="M12 1l9 4-1 12-8 6-8-6L3 5z" fill="#183a66" stroke="#9eb8d3" strokeWidth="1.500" /><path d="M3 5l9 5 9-5M12 10v12" stroke="#e8f0f8" strokeWidth="2" /></Ico>, 0],
  [<Ico w={24} crisp><g {...N}><path d="M3 0h18v24H3z" fill="#fff" /><path d="M5 2h14v4H5zM5 9h3v2H5zM10 9h3v2h-3zM15 9h3v2h-3zM5 13h3v2H5zM10 13h3v2h-3zM15 13h3v2h-3zM5 17h3v3H5zM10 17h3v3h-3zM15 17h3v3h-3z" fill="#222" /></g></Ico>, 1],
  [<Ico w={24}><g {...N}><path d="M12 1l3 7 8 1-6 5 2 8-7-4z" fill="#e2493c" /><path d="M12 1L9 8 1 9l6 5 5-2z" fill="#ffd23e" /><path d="M7 14l-2 9 7-5v-6z" fill="#6a3fb0" /><path d="M12 12l11-3-6 5 2 8-7-4z" fill="#a9a9b5" /></g></Ico>, 1],
  [<Ico w={24}><path d="M2 2h20v20H2z" fill="#3c0a08" stroke="#e02312" strokeWidth="1.500" /><path d="M6 17c2-1 5-5 6-9 .5-2.500-1.500-2.500-1 0 .5 3.500 3 6 6 6 2 0 2-2 0-2-3 0-7 1-11 5" stroke="#fff" strokeWidth="1.200" /></Ico>, 1, 1],
  [<Ico w={24}><circle {...N} cx="12" cy="12" r="11" fill="#12467a" /><circle cx="16" cy="9" r="3.500" stroke="#fff" strokeWidth="1.800" /><path d="M2 14l7 3 5-5" stroke="#fff" strokeWidth="3" /><circle cx="8.500" cy="17" r="2.500" fill="#ccd" stroke="#fff" /></Ico>, 1],
  [<Ico w={24}><g {...N}><path d="M1 1h21v21H1z" fill="#b9d989" /><path d="M3 3h17v17H3z" fill="#6aa62e" /><path d="M12 12h11v11H12z" fill="#e4f2cf" /></g><path d="M14 18h5v4M13 21l3-3" stroke="#5d9a22" strokeWidth="1.500" /><AppGlyph x="4" y="17" $s={16}>P</AppGlyph></Ico>, 1],
  [<Ico w={24}><g {...N}><path d="M12 1l10 5v11l-10 6-10-6V6z" fill="#9dbbe0" /><path d="M12 1l10 5-10 5L2 6z" fill="#e5eef8" /><path d="M12 11l10-5v11l-10 6z" fill="#5f83b8" /></g></Ico>, 1],
  [<Ico w={24}><path d="M18 0l6 2v19l-6 3-18-4 18 1z" fill="#8661c5" {...N} /><path d="M2 7v8l2-1 3-3 5 4V6L7 10 4 7.500z" stroke="#8661c5" strokeWidth="1.800" /></Ico>, 1],
];
const DiaTask = () => <Ico w={24}><path d="M0 0h24v24H0z" fill="#fff" {...N} /><path d="M6 2v22M1 18h11c6 0 9-2 9-6s-3-6-9-6H5M0 12.500h24" strokeWidth="1.600" /><path d="M11 8l4 6H8z" stroke="#e02020" strokeWidth="1.500" /><path d="M4 1h4v4H4z" fill="#0c1" {...N} /></Ico>;
const W = { stroke: "#fff" };

const menus = [
  [<><u>A</u>rchivo</>, 41, 0], [<><u>E</u>ditar</>, 30, -0.3], [<><u>V</u>er</>, 17, -0.3], [<><u>C</u>apas</>, 32, -0.2], [<><u>O</u>bjetos</>, 41, -0.3],
  [<><u>S</u>eleccionado</>, 70, -0.25], [<><u>H</u>erramientas</>, 71, -0.48], [<>Mé<u>t</u>odos de entrada</>, 106, -0.4], [<>A<u>y</u>uda</>, 40, -0.25],
];

export default function App() {
  return (
    <Screen>
      <Global />
      <TitleBar>
        <DiaLogo s={18} />
        <Title $ls={-0.33}>CDUE3 (C:\Users\christopher\Documents\IPC2_ProyectoF2_201602569\DOCUMENTACION\Casos de uso) - diaw.exe</Title>
        <WindowButtons>
          <SysButton><Ico w={12} crisp><path d="M1 6.500h10" /></Ico></SysButton>
          <SysButton><Ico w={12} crisp><path d="M1.500 1.500h9v9h-9z" /></Ico></SysButton>
          <SysButton><Ico w={12}><path d="M1 1l10 10M11 1L1 11" /></Ico></SysButton>
        </WindowButtons>
      </TitleBar>
      <MenuBar>{menus.map(([t, w, ls], i) => <MenuItem key={i} $w={w} $ls={ls}>{t}</MenuItem>)}</MenuBar>
      <Toolbar>
        {["new", "open", "save", "saveAs", "exp", "print"].map((k) => <ToolSlot key={k}>{tool[k]}</ToolSlot>)}
        <ToolSep />
        {["copy", "cut", "paste"].map((k) => <ToolSlot key={k}>{tool[k]}</ToolSlot>)}
        <ToolSep />
        {["in", "fit", "out"].map((k) => <ToolSlot key={k}><Mag kind={k} /></ToolSlot>)}
        <ZoomCombo><span>100%</span><ComboArrow><Chevron /></ComboArrow></ZoomCombo>
        <ToolSep $l={5} $r={8} />
        <ToolSlot><GridIcon /></ToolSlot>
        <SnapButton><SnapIcon /></SnapButton>
      </Toolbar>
      <Body>
        <Side>
          <Tools>{toolbox.map((t, i) => <ToolCell key={i} $on={i === 0}>{t}</ToolCell>)}</Tools>
          <Rule />
          <SheetCombo><span>UML</span><ComboArrow><Chevron /></ComboArrow></SheetCombo>
          <SheetArea>
            <Sheet>{uml.map((u, i) => <Cell key={i}><Ico w={28} crisp>{u}</Ico></Cell>)}</Sheet>
          </SheetArea>
          <StyleArea><StyleSwatches /></StyleArea>
          <LineButtons>
            <Cell><Ico w={40} h={20} crisp><path d="M1 10h38" strokeWidth="2" /></Ico></Cell>
            <Cell><Ico w={40} h={20} crisp><path d="M0 10h40" strokeWidth="2" /></Ico></Cell>
            <Cell><Ico w={40} h={20} crisp><path d="M0 10h28" strokeWidth="2" /><path d="M40 10L21 1l5 9-5 9z" fill="#000" stroke="none" /></Ico></Cell>
          </LineButtons>
        </Side>
        <Notebook>
          <Tabs>
            {["CDU1.dia", "CDU2.dia", "CDU3.dia"].map((t, i) => <Tab key={t} $w={i === 2 ? 80 : 81} $gap={5} $ls={-0.35}>{t}<TabClose /></Tab>)}
            <Tab $on $w={72} $gap={5} $ls={-0.2}>CDUE3<TabClose /></Tab>
          </Tabs>
          <Page>
            <Corner />
            <HRuler />
            <div />
            <VScroll>
              <ScrollArrow $w={15} $h={16}><Ico w={10} h={8}><path d="M1.500 6L5 2.500 8.500 6" stroke="#b5b5b5" strokeWidth="2" /></Ico></ScrollArrow>
              <Thumb />
              <ScrollArrow $w={15} $h={18}><Ico w={10} h={8}><path d="M1.500 3L5 6.500 8.500 3" stroke="#555" strokeWidth="2" /></Ico></ScrollArrow>
            </VScroll>
            <VRuler />
            <Canvas />
            <HScroll>
              <ScrollArrow $w={17} $h={16}><Ico w={8} h={10}><path d="M5.500 1.500L2 5l3.500 3.500" stroke="#b5b5b5" strokeWidth="2" /></Ico></ScrollArrow>
              <Thumb $mb={1} />
              <ScrollArrow $w={18} $h={16}><Ico w={8} h={10}><path d="M3 1.500L6.500 5 3 8.500" stroke="#555" strokeWidth="2" /></Ico></ScrollArrow>
            </HScroll>
            <Pan><Ico w={12}><path d="M6 1v10M1 6h10" strokeWidth="2" /><path d="M4 3l2-3 2 3zM4 9l2 3 2-3zM3 4L0 6l3 2zM9 4l3 2-3 2z" fill="#000" stroke="none" /></Ico></Pan>
          </Page>
        </Notebook>
      </Body>
      <Status>
        <StatusInner>
          <Ico w={12} crisp><path d="M8 1h2v2H8zM5 4h2v2H5zM8 4h2v2H8zM2 7h2v2H2zM5 7h2v2H5zM8 7h2v2H8z" fill="#b8b8b8" stroke="none" /></Ico>
        </StatusInner>
      </Status>
      <Taskbar>
        <StartArea>
          <SysButton><Ico w={16}><path d="M0 2.500l7-1v6H0zM8 1.300L16 0v7.500H8zM0 8.500h7v6l-7-1zM8 8.500h8V16l-8-1.300z" fill="#fff" stroke="none" /></Ico></SysButton>
          <SysButton><Ico w={16}><circle cx="10.500" cy="5.500" r="4.800" {...W} strokeWidth="1.400" /><path d="M7 9l-6.500 6.500" {...W} strokeWidth="1.400" /></Ico></SysButton>
          <SysButton><Ico w={20} h={16} crisp><path d="M4.500 1.500h11v13h-11zM3 3.500H.5v9H3M17 3.500h2.500v9H17" {...W} /></Ico></SysButton>
        </StartArea>
        {apps.map(([icon, run, multi], i) => (
          <AppButton key={i}><AppFace>{icon}</AppFace>{run ? <RunBar $multi={multi} /> : null}</AppButton>
        ))}
        <AppButton $on><AppFace $on><DiaTask /></AppFace><RunBar /></AppButton>
        <Tray>
          <TrayItem $w={36}><Ico w={16}><circle cx="10.500" cy="4" r="2.500" {...W} /><circle cx="4.500" cy="8" r="2" {...W} /><path d="M6.500 11c1-5 8-5 8.500 0M1 15c0-5 6-5 7 0" {...W} /></Ico></TrayItem>
          <TrayItem $w={36}><Ico w={12} h={8}><path d="M1 7l5-5 5 5" {...W} strokeWidth="1.300" /></Ico></TrayItem>
          <TrayItem $w={12}><Ico w={14}><path d="M4 1l3 2.200L3.700 5.300.700 3zM10 1L7 3.200l3.300 2.100 3-2.300zM.700 7.500l3-2.200L7 7.500 4 9.600zM13.300 7.500l-3-2.200L7 7.500l3 2.100zM4 10.500l3-2.100 3 2.100-3 2z" fill="#fff" stroke="none" /></Ico></TrayItem>
          <TrayItem $w={36}><Ico w={16} h={14}><path d="M5.500 4.500h9v7h-9zM15 7v2" {...W} /><path d="M7 6h6v4H7z" fill="#fff" stroke="none" /><path d="M1.500 1v2M4.500 1v2M.500 3.500h5v1.500l-1.500 1.500h-2L.500 5zM3 6.500v5h3" {...W} /></Ico></TrayItem>
          <TrayItem $w={14}><Ico w={14}><path d="M1.500 13C1.500 6 6 1.500 13 1.500M4.500 13c0-5 3-8.500 8.500-8.500M7.500 13c0-3 2-5.500 5.500-5.500" {...W} /><circle cx="11.500" cy="11.500" r="1.500" fill="#fff" stroke="none" /></Ico></TrayItem>
          <TrayItem $w={30}><Ico w={17} h={14}><path d="M1 5h3l4-4v12L4 9H1z" {...W} /><path d="M10 5c1 1 1 3 0 4M12 3c2 2 2 6 0 8" {...W} /><path d="M14 1.500c3 3 3 8 0 11" stroke="#888" /></Ico></TrayItem>
          <TrayItem $w={26}><Ico w={23} h={14} crisp><path d="M.500 1.500h22v11H.500z" {...W} /><path d="M3 4.500h17M3 7.500h17" {...W} strokeDasharray="1 1" /><path d="M6 10.500h11" {...W} /></Ico></TrayItem>
          <TrayItem $w={42}>ESP</TrayItem>
          <Clock>06:12<br />3/01/2018</Clock>
          <TrayItem $w={50}><Ico w={28} h={26}><path d="M3 3h16v12H8l-3 3v-3H3z" fill="#fff" stroke="none" /><path d="M6 6.500h10M6 9h10M6 11.500h7" stroke="#222" /><circle cx="18" cy="17" r="7.500" fill="#333" stroke="#999" /><AppGlyph x="15" y="21.500" $s={11}>1</AppGlyph></Ico></TrayItem>
          <ShowDesktop />
        </Tray>
      </Taskbar>
    </Screen>
  );
}
